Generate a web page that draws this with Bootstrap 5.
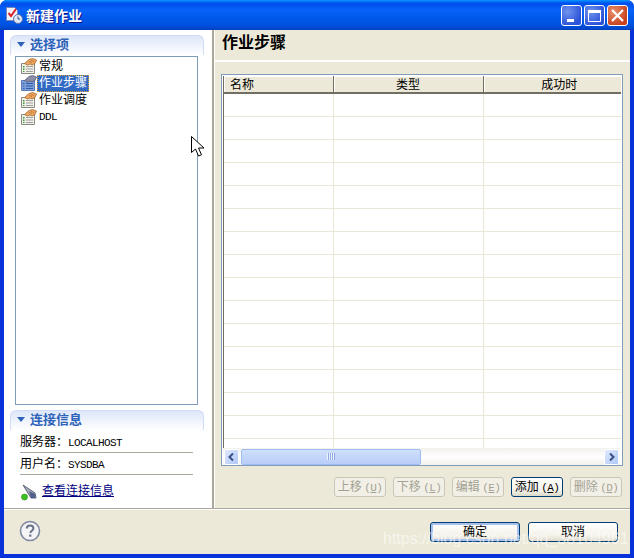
<!DOCTYPE html>
<html lang="zh-CN">
<head>
  <meta charset="UTF-8">
  <title>新建作业</title>
  <link href="https://cdn.jsdelivr.net/npm/bootstrap@5.3.0/dist/css/bootstrap.min.css" rel="stylesheet">
  <style>
    html, body { margin: 0; padding: 0; background: #fff; }
    body { width: 634px; height: 558px; overflow: hidden; font-family: "Noto Sans CJK SC", "Liberation Sans", sans-serif; font-size: 12px; line-height: 14px; color: #000; }
    .latin { font-family: "Liberation Mono", "DejaVu Sans Mono", monospace; font-size: 11px; letter-spacing: -.6px; }
    .win { width: 634px; height: 558px; background: #0831d9; border-radius: 7px 7px 0 0; position: relative; overflow: hidden; }
    .titlebar { height: 30px; padding: 0 6px 0 5px; background: linear-gradient(#0997ff 0, #0053ee 3px, #0050ee 5px, #0663fa 10px, #0058e8 18px, #0054e3 24px, #0048d0 28px, #0040b8 30px); }
    .titlebar .ttl { color: #fff; font-size: 14px; font-weight: 700; margin-left: 3px; text-shadow: 1px 1px 0 #0f1089; }
    .capbtn { width: 21px; height: 21px; border: 1px solid #fff; border-radius: 3px; background: radial-gradient(circle at 30% 30%, #6f93ee, #2b52d8 75%); margin-left: 2px; display: block; padding: 2px; }
    .capbtn.close-red { background: radial-gradient(circle at 30% 30%, #e8906e, #c8401c 75%); }
    .client { height: 524px; margin: 0 4px 4px 4px; background: #ece9d8; }
    .mainrow { height: 479px; border-bottom: 1px solid #aca899; box-shadow: 0 1px 0 #fff; }
    .leftpane { width: 210px; background: #fff; border-right: 2px solid #aca899; padding: 5px 0 0 0; }
    .rightpane { width: 416px; box-shadow: inset 1px 0 0 #fff; }
    .sect { margin: 0 8px 0 6px; height: 20px; padding: 0 0 5px 6px; border: 1px solid #cfdcf5; border-bottom: 0; border-radius: 6px 6px 0 0; background: linear-gradient(#dde6f9, #fff); color: #2c62b8; font-size: 13px; font-weight: 700; line-height: 15px; }
    .tri { width: 0; height: 0; border-left: 4.5px solid transparent; border-right: 4.5px solid transparent; border-top: 5px solid #2c62b8; margin-right: 5px; margin-top: 2px; }
    .tree { margin: 1px 14px 5px 11px; height: 349px; border: 1px solid #7f9db9; padding: 1px 0 0 5px; }
    .treeitem { height: 17px; }
    .treeitem .lbl { height: 17px; padding: 0 2px; margin-left: 0; line-height: 13px; }
    .treeitem .lbl.latin { line-height: 17px; }
    .treeitem.sel .lbl { background: #316ac5; color: #fff; outline: 1px dotted #e0a030; outline-offset: -1px; }
    .infopad { padding: 1px 19px 0 16px; }
    .inforow { height: 22px; border-bottom: 1px solid #aca899; padding-top: 3px; }
    .infolink { color: #000080; padding-bottom: 5px; }
    .pagehead { height: 32px; padding: 2px 0 0 8px; font-size: 16px; font-weight: 700; line-height: 19px; border-bottom: 2px solid #aca899; border-image: linear-gradient(#aca899 50%, #fff 50%) 1; }
    .gridbox { margin: 12px 7px 0 7px; height: 392px; width: 402px; border: 1px solid #7f9db9; background: #fff; padding: 1px 0 0 1px; }
    .gridscroll { height: 372px; overflow: hidden; border-left: 1px solid #716f64; }
    .jobgrid { table-layout: fixed; width: 397px; margin: 0; border-collapse: collapse; }
    .jobgrid th { height: 17px; padding: 0; background: #ece9d8; font-weight: 400; text-align: center; line-height: 14px; border-right: 1px solid #716f64; border-bottom: 2px solid #716f64; box-shadow: inset 1px 1px 0 #fff; }
    .jobgrid th:first-child { text-align: left; padding-left: 6px; }
    .jobgrid th:last-child { border-right: 0; padding-left: 14px; }
    .jobgrid td { height: 23px; padding: 0; border-right: 1px solid #ebe7d6; border-bottom: 1px solid #ebe7d6; }
    .jobgrid td:last-child { border-right: 0; }
    .hscroll { height: 17px; width: 397px; background: linear-gradient(#f3f1ec, #fefefe 50%, #f3f1ec); padding: 0 1px; }
    .sbtn { width: 15px; height: 16px; border: 1px solid #fff; border-radius: 2px; background: linear-gradient(135deg, #e1eafe, #aec8f7); padding: 0; display: block; }
    .sthumb { width: 180px; height: 16px; margin-left: 2px; border: 1px solid #9ebcef; border-radius: 2px; background: linear-gradient(#cfdffc, #b8cdf8); }
    .grip { width: 8px; height: 7px; background: repeating-linear-gradient(90deg, #eef4ff 0 1px, #8fa9e0 1px 2px); }
    .actions { padding: 11px 8px 0 0; gap: 7px; }
    .xbtn { width: 52px; height: 20px; padding: 0 0 1px; font-size: 12px; line-height: 16px; border: 1px solid #003c74; border-radius: 3px; background: linear-gradient(#fff, #f4f2ea 70%, #dcd8c8); color: #000; }
    .xbtn:disabled { border-color: #c9c7ba; background: #f2f0e6; color: #a3a294; opacity: 1; }
    .footbar { height: 44px; padding: 11px 12px 0 15px; }
    .dlgbtn { width: 90px; height: 20px; line-height: 16px; padding-bottom: 2px; }
    .dlgbtn.def { box-shadow: inset 0 0 0 2px #a8c0ec; }
    .foot-btns { gap: 8px; padding-top: 2px; }
    .watermark { position: absolute; left: 383px; top: 530px; color: rgba(255,255,255,.55); font: 16px/18px "Liberation Sans", sans-serif; white-space: nowrap; pointer-events: none; }
    .pointer { position: absolute; left: 191px; top: 136px; }
  </style>
</head>
<body>
  <svg width="0" height="0" class="position-absolute">
    <defs>
      <g id="job">
        <path d="M.5 5.500h13v10H.5z" fill="#f1f0e8" stroke="#8a8a80"/>
        <path d="M2 8h1.500v1.500H2zM2 10.500h1.500V12H2zM2 13h1.500v1H2z" fill="#3b9b3b"/>
        <path d="M5 8.500h7M5 11h7M5 13.500h7" stroke="#a0a0a0"/>
        <path d="M3.500 5.500 8 1.500 11.500.5l4 1.500-1.500 3.500-3 1.500-2-1-2.500 1z" fill="#eda562" stroke="#a8682a" stroke-width=".8"/>
        <path d="M8 3.500l3 1M10 2.500l3 1" stroke="#b8752f" stroke-width=".8"/>
      </g>
      <g id="jobsel">
        <path d="M.5 5.500h13v10H.5z" fill="#7e9fd8" stroke="#5a7ab8"/>
        <path d="M5 8.500h7M5 11h7M5 13.500h7M2 8.500h1.500M2 11h1.500M2 13.500h1.500" stroke="#2f5aa8"/>
        <path d="M3.500 5.500 8 1.500 11.500.5l4 1.500-1.500 3.500-3 1.500-2-1-2.500 1z" fill="#8c8ea8" stroke="#5a5c78" stroke-width=".8"/>
      </g>
    </defs>
  </svg>

  <div class="win">
    <div class="titlebar d-flex align-items-center">
      <svg width="18" height="18" viewBox="0 0 18 18">
        <path d="M1.500 1.500h8l3 3v10h-11z" fill="#f3f3fb" stroke="#7d86b8"/>
        <path d="M3.500 7 6 10l5-7" fill="none" stroke="#d8242c" stroke-width="2"/>
        <circle cx="13" cy="13" r="4.500" fill="#dfe6f5" stroke="#5a6fa8"/>
        <path d="M13 10.500V13h2" fill="none" stroke="#39508c"/>
      </svg>
      <span class="ttl flex-grow-1">新建作业</span>
      <span class="capbtn">
        <svg width="15" height="15" viewBox="0 0 15 15" class="d-block"><path d="M3 11h7v3H3z" fill="#fff"/></svg>
      </span>
      <span class="capbtn">
        <svg width="15" height="15" viewBox="0 0 15 15" class="d-block"><path d="M1.500 3.500h12v10h-12z" fill="none" stroke="#fff"/><path d="M1 2h13v3H1z" fill="#fff"/></svg>
      </span>
      <span class="capbtn close-red">
        <svg width="15" height="15" viewBox="0 0 15 15" class="d-block"><path d="m2 2 11 11M13 2 2 13" stroke="#fff" stroke-width="2.200"/></svg>
      </span>
    </div>

    <div class="client d-flex flex-column">
      <div class="mainrow d-flex">
        <div class="leftpane d-flex flex-column flex-shrink-0">
          <div class="sect d-flex align-items-center"><span class="tri"></span>选择项</div>
          <div class="tree">
            <div class="treeitem d-flex"><svg width="16" height="16"><use href="#job"/></svg><span class="lbl">常规</span></div>
            <div class="treeitem sel d-flex"><svg width="16" height="16"><use href="#jobsel"/></svg><span class="lbl">作业步骤</span></div>
            <div class="treeitem d-flex"><svg width="16" height="16"><use href="#job"/></svg><span class="lbl">作业调度</span></div>
            <div class="treeitem d-flex"><svg width="16" height="16"><use href="#job"/></svg><span class="lbl latin">DDL</span></div>
          </div>
          <div class="sect d-flex align-items-center"><span class="tri"></span>连接信息</div>
          <div class="infopad">
            <div class="inforow">服务器：<span class="latin">LOCALHOST</span></div>
            <div class="inforow">用户名：<span class="latin">SYSDBA</span></div>
            <div class="d-flex align-items-center pt-1 mt-1">
              <svg width="18" height="17" viewBox="0 0 18 17" class="me-1">
                <path d="M3 1 15 9l1 5-5 0Z" fill="#a8aeb8" stroke="#5c6478"/>
                <path d="M9 7l6 3 0 4-4 0z" fill="#50608a"/>
                <circle cx="4.500" cy="13" r="3" fill="#3cc020" stroke="#2a8a18" stroke-width=".6"/>
              </svg>
              <a href="#" class="infolink">查看连接信息</a>
            </div>
          </div>
        </div>

        <div class="rightpane d-flex flex-column">
          <div class="pagehead">作业步骤</div>
          <div class="gridbox">
            <div class="gridscroll">
              <table class="jobgrid">
                <colgroup><col style="width:109px"><col style="width:150px"><col style="width:138px"></colgroup>
                <thead><tr><th>名称</th><th>类型</th><th>成功时</th></tr></thead>
                <tbody id="rows"></tbody>
              </table>
            </div>
            <div class="hscroll d-flex align-items-center">
              <button type="button" class="sbtn"><svg width="13" height="14" viewBox="0 0 13 14" class="d-block"><path d="M8 3.500 4.500 7 8 10.500" fill="none" stroke="#3a4f86" stroke-width="2"/></svg></button>
              <div class="sthumb d-flex align-items-center justify-content-center"><span class="grip"></span></div>
              <span class="flex-grow-1"></span>
              <button type="button" class="sbtn"><svg width="13" height="14" viewBox="0 0 13 14" class="d-block"><path d="M5 3.500 8.500 7 5 10.500" fill="none" stroke="#3a4f86" stroke-width="2"/></svg></button>
            </div>
          </div>
          <div class="actions d-flex justify-content-end">
            <button type="button" class="xbtn" disabled>上移 <span class="latin">(<u>U</u>)</span></button>
            <button type="button" class="xbtn" disabled>下移 <span class="latin">(<u>L</u>)</span></button>
            <button type="button" class="xbtn" disabled>编辑 <span class="latin">(<u>E</u>)</span></button>
            <button type="button" class="xbtn">添加 <span class="latin">(<u>A</u>)</span></button>
            <button type="button" class="xbtn" disabled>删除 <span class="latin">(<u>D</u>)</span></button>
          </div>
        </div>
      </div>

      <div class="footbar d-flex justify-content-between">
        <svg width="22" height="22" viewBox="0 0 22 22">
          <circle cx="11" cy="11" r="9.500" fill="#f4f4f6" stroke="#7f88a0" stroke-width="1.600"/>
          <path d="M7.800 8.500c0-2 1.400-3 3.300-3s3.300 1 3.300 2.800c0 2.400-3 2.400-3 4.700" fill="none" stroke="#6a7288" stroke-width="2"/>
          <rect x="10.200" y="14.500" width="2.200" height="2.200" fill="#6a7288"/>
        </svg>
        <div class="foot-btns d-flex">
          <button type="button" class="xbtn dlgbtn def">确定</button>
          <button type="button" class="xbtn dlgbtn">取消</button>
        </div>
      </div>
    </div>

    <svg class="pointer" width="14" height="22" viewBox="0 0 14 22"><path d="M.5.500v16l4-3.500 3 7 3-1.200-3-6.800h5.500z" fill="#fff" stroke="#000"/></svg>
    <div class="watermark">https://blog.csdn.net/qq_38104961</div>
  </div>

  <script>
    // the grid is empty, only the row lines show
    var rows = '';
    for (var i = 0; i < 16; i++) rows += '<tr><td></td><td></td><td></td></tr>';
    document.getElementById('rows').innerHTML = rows;
  </script>
  <script src="https://cdn.jsdelivr.net/npm/bootstrap@5.3.0/dist/js/bootstrap.bundle.min.js"></script>
</body>
</html>
